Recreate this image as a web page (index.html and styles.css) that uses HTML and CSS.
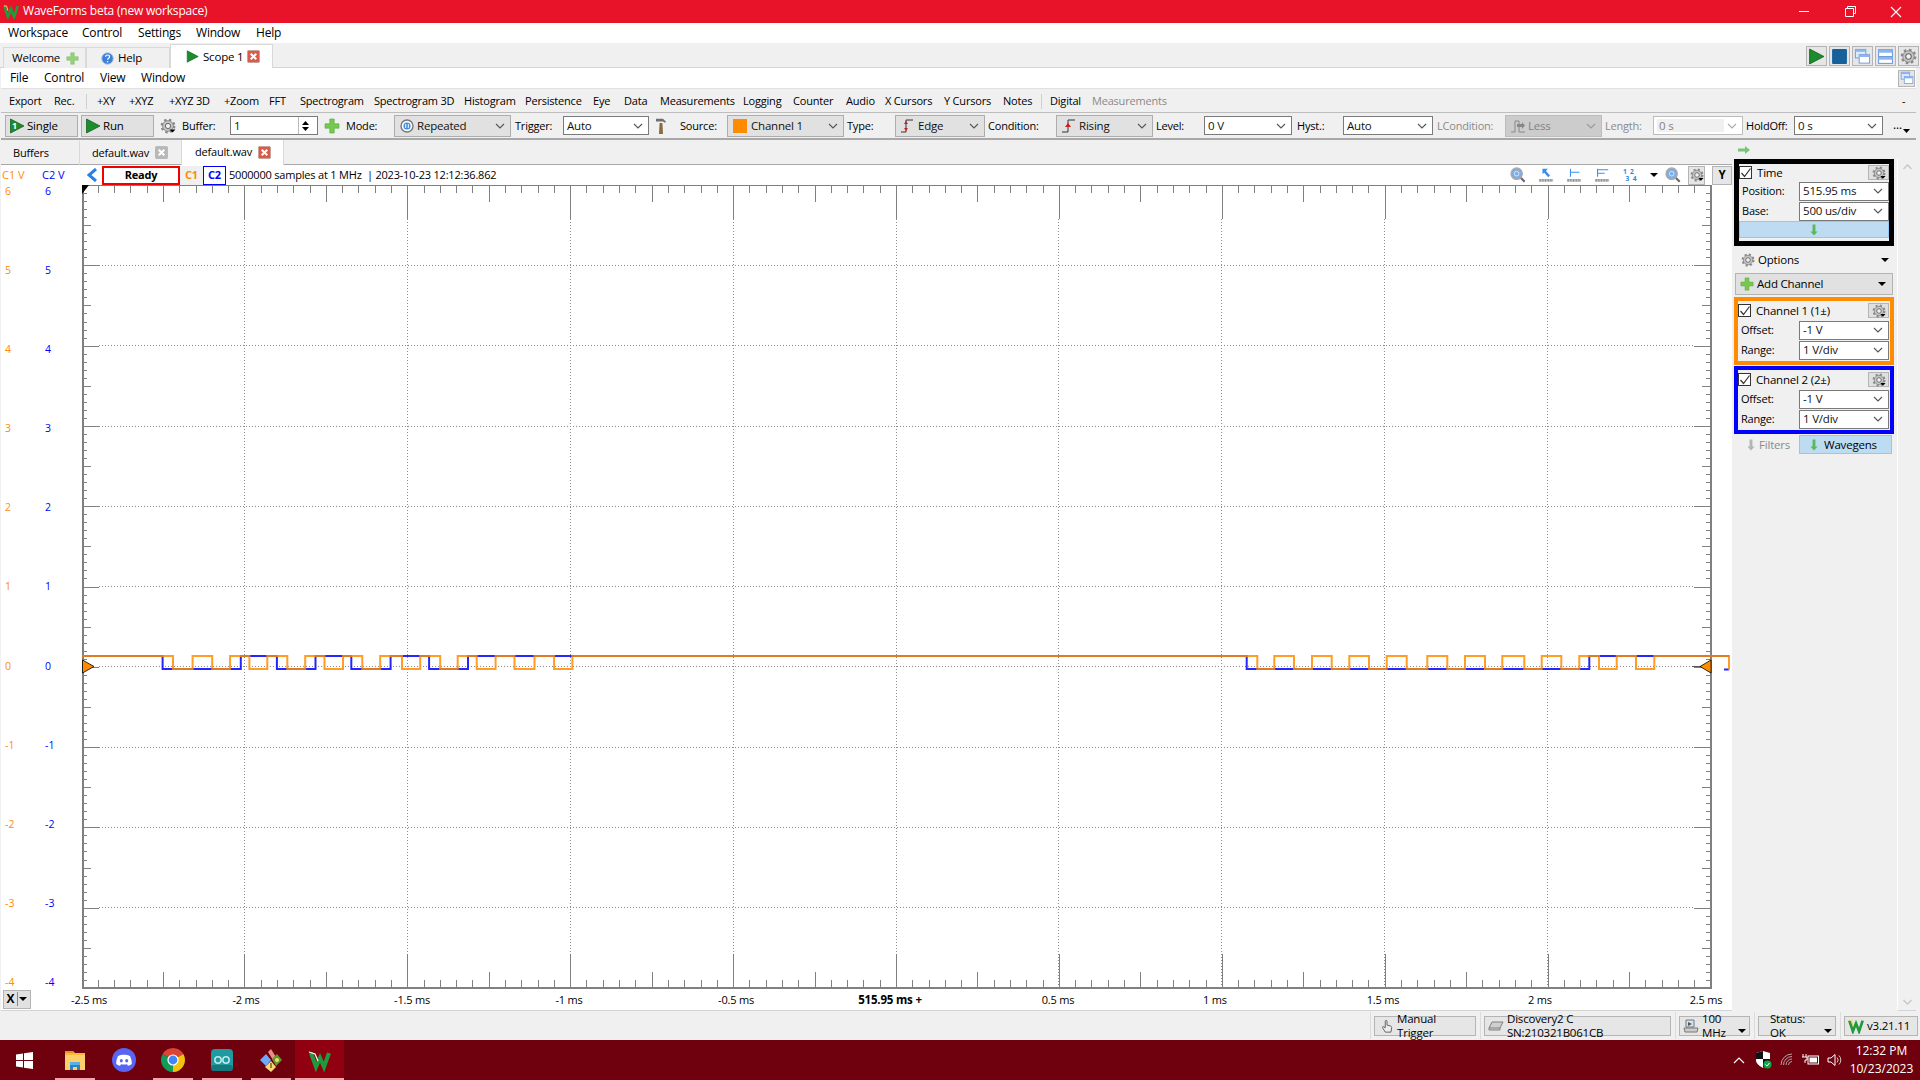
FILE: index.html
```html
<!DOCTYPE html>
<html lang="en">
<head>
<meta charset="utf-8">
<title>WaveForms beta</title>
<link rel="stylesheet" href="styles.css">
</head>
<body>
<svg class="defs" aria-hidden="true">
  <symbol id="gear" viewBox="0 0 16 16">
    <circle cx="8" cy="8" r="6.2" fill="none" stroke="#8a8a8a" stroke-width="2.4" stroke-dasharray="2.4 2.5"/>
    <circle cx="8" cy="8" r="5.4" fill="#c4c4c4" stroke="#7d7d7d" stroke-width=".8"/>
    <circle cx="8" cy="8" r="2.6" fill="#f2f2f2" stroke="#666" stroke-width="1"/>
  </symbol>
  <symbol id="gearc" viewBox="0 0 16 16">
    <use href="#gear"/>
    <path d="M9.5 11.5h6l-3 3z" fill="#000"/>
  </symbol>
  <symbol id="play" viewBox="0 0 16 16">
    <path d="M1.5 1v14L15 8z" fill="#1c8c2c" stroke="#146320" stroke-width=".8"/>
  </symbol>
  <symbol id="plus" viewBox="0 0 16 16">
    <path d="M5.8 1h4.4v4.8H15v4.4h-4.8V15H5.8v-4.8H1V5.8h4.8z" fill="#74c94e" stroke="#5aa83c" stroke-width=".6"/>
  </symbol>
  <symbol id="chev" viewBox="0 0 10 6">
    <path d="M1 1l4 4 4-4" fill="none" stroke="currentColor" stroke-width="1.1"/>
  </symbol>
  <symbol id="x" viewBox="0 0 14 14">
    <rect x=".5" y=".5" width="13" height="13" rx="1" fill="currentColor" stroke="#9b9b9b" stroke-width=".5"/>
    <path d="M4 4l6 6M10 4l-6 6" stroke="#fff" stroke-width="2.2"/>
  </symbol>
  <symbol id="down" viewBox="0 0 10 16">
    <path d="M3.2 1h3.6v9H9.5L5 15 .5 10h2.7z" fill="currentColor"/>
  </symbol>
  <symbol id="logo" viewBox="0 0 18 16">
    <path d="M1.5 2l4 12 3.5-9 3.5 9 4-12" fill="none" stroke="#1f9a3c" stroke-width="3"/>
    <path d="M1 1.5l3 .5 1.5 5" fill="none" stroke="#e9d24a" stroke-width="1.2"/>
  </symbol>
  <symbol id="mag" viewBox="0 0 18 18">
    <path d="M11.5 11.5l5 5" stroke="#666" stroke-width="2.4"/>
    <circle cx="7.5" cy="7.5" r="6.3" fill="#7eaee6" stroke="#a9a9a9" stroke-width="1.6"/>
    <circle cx="7.5" cy="7.5" r="2.6" fill="none" stroke="#dcebfb" stroke-width="1"/>
  </symbol>
  <symbol id="ruler" viewBox="0 0 18 16">
    <rect x="1" y="12.5" width="16" height="3" fill="#bdbdbd"/>
    <path d="M2.5 12.5v3M5.5 12.5v3M8.5 12.5v3M11.5 12.5v3M14.5 12.5v3" stroke="#777" stroke-width=".8"/>
  </symbol>
  <symbol id="wins" viewBox="0 0 18 18">
    <rect x="1.5" y="1.5" width="11" height="9" fill="#dcebfb" stroke="#6d9be0"/>
    <rect x="1.5" y="1.5" width="11" height="2.5" fill="#8db4ec"/>
    <rect x="5.5" y="7" width="11" height="9" fill="#fff" stroke="#6d9be0"/>
    <rect x="5.5" y="7" width="11" height="2.5" fill="#8db4ec"/>
  </symbol>
</svg>

<header class="title">
  <svg class="ic-title"><use href="#logo"/></svg>
  <span class="title-text">WaveForms beta (new workspace)</span>
  <div class="caption">
    <span class="cap-btn"><svg width="11" height="11"><path d="M0 5.5h10" stroke="#fff"/></svg></span>
    <span class="cap-btn"><svg width="11" height="11"><path d="M2.5 2.5V.5h8v7h-2M.5 2.5h8v8h-8z" fill="none" stroke="#fff"/></svg></span>
    <span class="cap-btn"><svg width="12" height="12"><path d="M1 1l10 10M11 1L1 11" stroke="#fff" stroke-width="1.1"/></svg></span>
  </div>
</header>

<nav class="menubar">
  <span>Workspace</span><span>Control</span><span>Settings</span><span>Window</span><span>Help</span>
</nav>

<div class="tabs-main">
  <div class="tab tab-welcome"><span>Welcome</span><svg class="i13 fade"><use href="#plus"/></svg></div>
  <div class="tab tab-help">
    <svg class="i13" viewBox="0 0 14 14"><circle cx="7" cy="7" r="6.2" fill="#3b7fd6" stroke="#a9c6ec"/><path d="M5 5.2c0-2.6 4.2-2.6 4.2 0 0 1.6-2.1 1.6-2.1 3.2" fill="none" stroke="#fff" stroke-width="1.3"/><circle cx="7.1" cy="10.5" r=".9" fill="#fff"/></svg>
    <span>Help</span>
  </div>
  <div class="tab tab-scope"><svg class="i13"><use href="#play"/></svg><span>Scope 1</span><svg class="i13 red"><use href="#x"/></svg></div>
  <div class="top-tools">
    <span class="tool"><svg class="i17"><use href="#play"/></svg></span>
    <span class="tool"><svg class="i17" viewBox="0 0 16 16"><rect x="1" y="1" width="14" height="14" rx="1" fill="#17619a"/></svg></span>
    <span class="tool"><svg class="i17"><use href="#wins"/></svg></span>
    <span class="tool"><svg class="i17" viewBox="0 0 16 16"><rect x="1.5" y="1.5" width="13" height="13" fill="#fff" stroke="#6d9be0"/><rect x="1.5" y="1.5" width="13" height="3" fill="#8db4ec"/><rect x="1.5" y="8" width="13" height="3" fill="#8db4ec"/><path d="M1.5 8h13" stroke="#6d9be0"/></svg></span>
    <span class="tool"><svg class="i17"><use href="#gear"/></svg></span>
  </div>
</div>

<div class="sheet">
  <div class="submenu">
    <span>File</span><span>Control</span><span>View</span><span>Window</span>
    <span class="tool tool-win"><svg class="i14"><use href="#wins"/></svg></span>
  </div>

  <div class="toolbar">
    <span>Export</span><span>Rec.</span><span>+XY</span><span>+XYZ</span><span>+XYZ 3D</span><span>+Zoom</span><span>FFT</span><span>Spectrogram</span><span>Spectrogram 3D</span><span>Histogram</span><span>Persistence</span><span>Eye</span><span>Data</span><span>Measurements</span><span>Logging</span><span>Counter</span><span>Audio</span><span>X Cursors</span><span>Y Cursors</span><span>Notes</span><span>Digital</span><span class="off">Measurements</span><span class="dash">-</span>
  </div>

  <div class="controls">
    <button class="btn w73"><svg class="i16" viewBox="0 0 16 16"><use href="#play"/><text x="3" y="11" class="one">1</text></svg>Single</button>
    <button class="btn w73"><svg class="i16"><use href="#play"/></svg>Run</button>
    <svg class="i16"><use href="#gearc"/></svg>
    <span class="lbl">Buffer:</span>
    <div class="combo white w88"><span>1</span><span class="spin"><svg width="7" height="4" viewBox="0 0 7 4"><path d="M3.5 0l3.5 4H0z"/></svg><svg width="7" height="4" viewBox="0 0 7 4"><path d="M0 0h7L3.5 4z"/></svg></span></div>
    <svg class="i16"><use href="#plus"/></svg>
    <span class="lbl">Mode:</span>
    <div class="combo gray w117"><svg class="i14" viewBox="0 0 14 14"><circle cx="7" cy="7" r="6" fill="#fff" stroke="#777" stroke-width="1.4"/><circle cx="7" cy="7" r="3.6" fill="#3d8ee6"/><path d="M5.7 5v4M8.3 5v4" stroke="#fff"/></svg><span>Repeated</span><svg class="chev"><use href="#chev"/></svg></div>
    <span class="lbl">Trigger:</span>
    <div class="combo white w86"><span>Auto</span><svg class="chev"><use href="#chev"/></svg></div>
    <svg class="i16" viewBox="0 0 16 16"><path d="M6.6 5h2.8l.6 11H6z" fill="#8a6a3a"/><path d="M3 .8h7l3 3-1 1-2-1.2H3z" fill="#6f6f6f"/></svg>
    <span class="lbl">Source:</span>
    <div class="combo gray w117"><span class="swatch"></span><span>Channel 1</span><svg class="chev"><use href="#chev"/></svg></div>
    <span class="lbl">Type:</span>
    <div class="combo gray w90"><svg class="i14" viewBox="0 0 14 14"><path d="M0 13h5V1h7" fill="none" stroke="#333"/><path d="M5 2l2 3H3zM5 12l2-3H3z" fill="#d11a1a"/></svg><span>Edge</span><svg class="chev"><use href="#chev"/></svg></div>
    <span class="lbl">Condition:</span>
    <div class="combo gray w97"><svg class="i14" viewBox="0 0 14 14"><path d="M0 13h6V1h7" fill="none" stroke="#333"/><path d="M6 4l3 4H3z" fill="#d11a1a"/></svg><span>Rising</span><svg class="chev"><use href="#chev"/></svg></div>
    <span class="lbl">Level:</span>
    <div class="combo white w88"><span>0 V</span><svg class="chev"><use href="#chev"/></svg></div>
    <span class="lbl">Hyst.:</span>
    <div class="combo white w90"><span>Auto</span><svg class="chev"><use href="#chev"/></svg></div>
    <span class="lbl off">LCondition:</span>
    <div class="combo dis-gray w97"><svg class="i14" viewBox="0 0 14 14"><path d="M0 13h4V2h4v11h6" fill="none" stroke="#888"/><path d="M6 5h5V3l3 3.5L11 10V8H6z" fill="#888"/></svg><span>Less</span><svg class="chev"><use href="#chev"/></svg></div>
    <span class="lbl off">Length:</span>
    <div class="combo dis w90"><span class="dis-in">0 s</span><svg class="chev"><use href="#chev"/></svg></div>
    <span class="lbl">HoldOff:</span>
    <div class="combo white w89"><span>0 s</span><svg class="chev"><use href="#chev"/></svg></div>
    <span class="more">...<svg width="7" height="4" viewBox="0 0 7 4"><path d="M0 0h7L3.5 4z"/></svg></span>
  </div>

  <div class="body-row">
    <section class="left">
      <div class="tabs-sub">
        <div class="tab2 t-buffers">Buffers</div>
        <div class="tab2 t-file"><span>default.wav</span><svg class="i13 grey"><use href="#x"/></svg></div>
        <div class="tab2 t-active"><span>default.wav</span><svg class="i13 red"><use href="#x"/></svg></div>
      </div>

      <div class="status-row">
        <span class="h1">C1 V</span><span class="h2">C2 V</span>
        <svg class="back" viewBox="0 0 11 14"><path d="M9 1L2 7l7 6" fill="none" stroke="#2a7fe0" stroke-width="3"/></svg>
        <span class="ready">Ready</span>
        <span class="c1">C1</span>
        <span class="c2">C2</span>
        <span class="info">5000000 samples at 1 MHz&nbsp; | 2023-10-23 12:12:36.862</span>
        <div class="plot-tools">
          <div class="pt-a">
            <svg class="i16"><use href="#mag"/></svg>
            <svg class="i16" viewBox="0 0 18 16"><use href="#ruler"/><path d="M5 1h6L9 3.5l4.5 5-2 2L7 5.5 5 7z" fill="#3b8ee8"/></svg>
            <svg class="i16" viewBox="0 0 18 16"><use href="#ruler"/><path d="M5 1v9M5 5h10" stroke="#3b8ee8" stroke-width="1.2"/></svg>
            <svg class="i16" viewBox="0 0 18 16"><use href="#ruler"/><path d="M4 1v9M4 2h12M4 6h8" stroke="#3b8ee8" stroke-width="1.2"/></svg>
            <svg class="i16" viewBox="0 0 18 16"><text x="1" y="7" class="nums">1</text><text x="9" y="7" class="nums">2</text><text x="4" y="15" class="nums">3</text><text x="12" y="15" class="nums">4</text></svg>
            <svg class="caret" viewBox="0 0 8 4"><path d="M0 0h8L4 4z"/></svg>
          </div>
          <div class="pt-b">
            <svg class="i16"><use href="#mag"/></svg>
            <span class="tool tool-g"><svg class="i14"><use href="#gearc"/></svg></span>
            <span class="tool tool-y">Y</span>
          </div>
        </div>
      </div>

      <div class="plot-row">
        <div class="yaxis">
          <div class="ycol orange"><span>6</span><span>5</span><span>4</span><span>3</span><span>2</span><span>1</span><span>0</span><span>-1</span><span>-2</span><span>-3</span><span>-4</span></div>
          <div class="ycol blue"><span>6</span><span>5</span><span>4</span><span>3</span><span>2</span><span>1</span><span>0</span><span>-1</span><span>-2</span><span>-3</span><span>-4</span></div>
        </div>
        <svg class="plot" viewBox="82 185 1650 804" preserveAspectRatio="none">
          <g stroke="#8c8c8c" stroke-width="1" stroke-dasharray="1 2" shape-rendering="crispEdges" fill="none">
            <path d="M244.5 219V988M407.5 219V988M570.5 219V988M733.5 219V988M896.5 219V988M1058.5 219V988M1221.5 219V988M1384.5 219V988M1547.5 219V988"/>
            <path d="M99 265.5H1694M99 345.5H1694M99 426.5H1694M99 506.5H1694M99 586.5H1694M99 666.5H1694M99 747.5H1694M99 827.5H1694M99 907.5H1694"/>
          </g>
          <g stroke="#808080" fill="none" shape-rendering="crispEdges">
            <path d="M81.5 189H1711" stroke-width="8" stroke-dasharray="1 15.29"/>
            <path d="M81.5 193.5H1711" stroke-width="17" stroke-dasharray="1 80.45"/>
            <path d="M81.5 202H1711" stroke-width="34" stroke-dasharray="1 161.9"/>
            <path d="M81.5 984H1711" stroke-width="8" stroke-dasharray="1 15.29"/>
            <path d="M81.5 980H1711" stroke-width="16" stroke-dasharray="1 80.45"/>
            <path d="M81.5 971H1711" stroke-width="34" stroke-dasharray="1 161.9"/>
            <path d="M84.5 185V988" stroke-width="5" stroke-dasharray="1 7.03"/>
            <path d="M86.5 185V988" stroke-width="9" stroke-dasharray="1 39.15"/>
            <path d="M90.5 185V988" stroke-width="17" stroke-dasharray="1 79.3"/>
            <path d="M1708.5 185V988" stroke-width="5" stroke-dasharray="1 7.03"/>
            <path d="M1706.5 185V988" stroke-width="9" stroke-dasharray="1 39.15"/>
            <path d="M1702.5 185V988" stroke-width="17" stroke-dasharray="1 79.3"/>
            <path d="M82.5 185V989M1711 185V989" stroke-width="2"/>
            <path d="M82 185.5H1711M82 988H1711" stroke-width="1.6"/>
            <path d="M1692 666.5h9" stroke="#555"/>
          </g>
          <path d="M82 656H162.6V669H240.8V656H276.9V669H315.5V656H351.3V669H390.6V656H429.1V669H468V656H1246.7V669H1589.3V656H1729M1724 669.5H1729" fill="none" stroke="#0000ff" stroke-opacity=".85" stroke-width="2"/>
          <path d="M82 656H173V669H192.6V656H212.2V669H230.1V656H249.4V669H267.3V656H287.3V669H305.2V656H324.5V669H343V656H362.3V669H380.2V656H402V669H420.2V656H440.2V669H457.7V656H476.7V669H495.6V656H514.5V669H534.5V656H554.1V669H572.4V656H1257.3V669H1274.3V656H1294V669H1312V656H1331.7V669H1349.3V656H1369V669H1386.7V656H1406.7V669H1427.3V656H1447.3V669H1465V656H1485V669H1502.3V656H1524.3V669H1541.7V656H1561.3V669H1579.3V656H1599V669H1616.7V656H1636V669H1654.3V656H1729V670" fill="none" stroke="#ff8c00" stroke-opacity=".85" stroke-width="2"/>
          <path d="M82.5 660L94 666.5 82.5 673z" fill="#ff8c00" stroke="#000" stroke-width=".8"/>
          <path d="M1711 660L1700 666.5 1711 673z" fill="#ff8c00" stroke="#000" stroke-width=".8"/>
          <path d="M82 185h7l-7 9z" fill="#000"/>
        </svg>
      </div>

      <div class="xaxis">
        <span class="xbtn"><b>X</b><svg class="caret" viewBox="0 0 8 4"><path d="M0 0h8L4 4z"/></svg></span>
        <span class="xl" style="left:88px">-2.5 ms</span>
        <span class="xl" style="left:245px">-2 ms</span>
        <span class="xl" style="left:411px">-1.5 ms</span>
        <span class="xl" style="left:568px">-1 ms</span>
        <span class="xl" style="left:735px">-0.5 ms</span>
        <span class="xl cur" style="left:889px">515.95 ms +</span>
        <span class="xl" style="left:1057px">0.5 ms</span>
        <span class="xl" style="left:1214px">1 ms</span>
        <span class="xl" style="left:1382px">1.5 ms</span>
        <span class="xl" style="left:1539px">2 ms</span>
        <span class="xl" style="left:1705px">2.5 ms</span>
      </div>
    </section>

    <aside class="panel">
      <div class="panel-main">
        <div class="green-arrow"><svg width="14" height="8" viewBox="0 0 14 8"><path d="M1 2.5h7V0l5 4-5 4V5.500H1z" fill="#78c478"/></svg></div>

        <div class="box box-time">
          <div class="box-head"><span class="check"><svg width="12" height="12" viewBox="0 0 12 12"><path d="M1.500 6l3 3.500L10.500 1.500" fill="none" stroke="#333" stroke-width="1.200"/></svg></span><span>Time</span><span class="tool tool-s"><svg class="i14"><use href="#gearc"/></svg></span></div>
          <div class="box-line"><span>Position:</span><div class="combo white wp"><span>515.95 ms</span><svg class="chev"><use href="#chev"/></svg></div></div>
          <div class="box-line"><span>Base:</span><div class="combo white wp"><span>500 us/div</span><svg class="chev"><use href="#chev"/></svg></div></div>
          <div class="expand"><svg class="dn"><use href="#down"/></svg></div>
        </div>

        <div class="options"><svg class="i14"><use href="#gear"/></svg><span>Options</span><svg class="caret-l" viewBox="0 0 8 4"><path d="M0 0h8L4 4z"/></svg></div>
        <div class="add"><svg class="i14"><use href="#plus"/></svg><span>Add Channel</span><svg class="caret-l" viewBox="0 0 8 4"><path d="M0 0h8L4 4z"/></svg></div>

        <div class="box box-ch b-orange">
          <div class="box-head"><span class="check"><svg width="12" height="12" viewBox="0 0 12 12"><path d="M1.500 6l3 3.500L10.500 1.500" fill="none" stroke="#333" stroke-width="1.200"/></svg></span><span>Channel 1 (1±)</span><span class="tool tool-s"><svg class="i14"><use href="#gearc"/></svg></span></div>
          <div class="box-line"><span>Offset:</span><div class="combo white wp"><span>-1 V</span><svg class="chev"><use href="#chev"/></svg></div></div>
          <div class="box-line"><span>Range:</span><div class="combo white wp"><span>1 V/div</span><svg class="chev"><use href="#chev"/></svg></div></div>
        </div>

        <div class="box box-ch b-blue">
          <div class="box-head"><span class="check"><svg width="12" height="12" viewBox="0 0 12 12"><path d="M1.500 6l3 3.500L10.500 1.500" fill="none" stroke="#333" stroke-width="1.200"/></svg></span><span>Channel 2 (2±)</span><span class="tool tool-s"><svg class="i14"><use href="#gearc"/></svg></span></div>
          <div class="box-line"><span>Offset:</span><div class="combo white wp"><span>-1 V</span><svg class="chev"><use href="#chev"/></svg></div></div>
          <div class="box-line"><span>Range:</span><div class="combo white wp"><span>1 V/div</span><svg class="chev"><use href="#chev"/></svg></div></div>
        </div>

        <div class="flt-row">
          <span class="flt"><svg class="dn grey-arrow"><use href="#down"/></svg>Filters</span>
          <span class="wvg"><svg class="dn"><use href="#down"/></svg>Wavegens</span>
        </div>
      </div>
      <div class="scroll">
        <svg width="11" height="6" viewBox="0 0 10 6"><path d="M1 5l4-4 4 4" fill="none" stroke="#c8c8c8" stroke-width="1.500"/></svg>
        <svg width="11" height="6" viewBox="0 0 10 6"><path d="M1 1l4 4 4-4" fill="none" stroke="#c8c8c8" stroke-width="1.500"/></svg>
      </div>
    </aside>
  </div>
</div>

<footer class="statusbar">
  <span class="sb s-manual"><svg class="i14" viewBox="0 0 14 16"><path d="M5 15l-3-5c-.6-1 .6-2 1.400-1L5 10V2.500c0-1.200 2-1.200 2 0V7l4 1c1 .3 1.500 1 1.300 2l-.8 5z" fill="#eee" stroke="#555"/></svg>Manual Trigger</span>
  <span class="sb s-disc"><svg class="i16" viewBox="0 0 16 12"><path d="M4 2h11l-3 6v2H1V8z" fill="#cfcfcf" stroke="#808080"/><path d="M1 8h11" stroke="#808080"/></svg>Discovery2 C SN:210321B061CB</span>
  <span class="sb s-mhz"><svg class="i16" viewBox="0 0 16 14"><path d="M3 1h8v7H3z" fill="#cfe3f5" stroke="#777"/><path d="M1 9h14l-1 4H2z" fill="#ccc" stroke="#777"/><path d="M5 3l4 2-4 2z" fill="#555"/></svg>100 MHz<svg class="caret" viewBox="0 0 8 4"><path d="M0 0h8L4 4z"/></svg></span>
  <span class="sb s-stat">Status: OK<svg class="caret" viewBox="0 0 8 4"><path d="M0 0h8L4 4z"/></svg></span>
  <span class="sb s-ver"><svg class="i16"><use href="#logo"/></svg>v3.21.11</span>
</footer>

<div class="taskbar">
  <div class="task start"><svg width="17" height="17" viewBox="0 0 17 17"><path d="M0 2.400l7-1V8H0zM8 1.300L17 0v8H8zM0 9h7v6.600l-7-1zM8 9h9v8l-9-1.300z" fill="#fff"/></svg></div>
  <div class="task open"><svg class="i24" viewBox="0 0 24 24"><path d="M2 3h8l2 2h10v17H2z" fill="#f5b93c"/><path d="M2 3h8l1 2H2z" fill="#d99a22"/><rect x="2" y="7" width="20" height="15" fill="#fbd06a"/><path d="M7 22v-6h10v6h-3v-3h-4v3z" fill="#2a83c8"/><rect x="7" y="14" width="10" height="3" fill="#58b0e8"/></svg></div>
  <div class="task"><svg class="i24" viewBox="0 0 24 24"><circle cx="12" cy="12" r="12" fill="#5865f2"/><path d="M6 8c3-1.600 9-1.600 12 0 1.200 2.500 1.800 5 1.800 8-1.200 1-2.600 1.600-3.800 1.800l-1-1.600c-1.800.5-4.200.5-6 0l-1 1.600c-1.200-.2-2.600-.8-3.800-1.800 0-3 .6-5.500 1.800-8z" fill="#fff"/><ellipse cx="9.300" cy="12.800" rx="1.500" ry="1.700" fill="#5865f2"/><ellipse cx="14.700" cy="12.800" rx="1.500" ry="1.700" fill="#5865f2"/></svg></div>
  <div class="task open"><svg class="i24" viewBox="0 0 24 24"><path d="M12 12L1.610 6A12 12 0 0 1 22.390 6z" fill="#db4437"/><path d="M12 12L22.390 6A12 12 0 0 1 12 24z" fill="#f4c20d"/><path d="M12 12V24A12 12 0 0 1 1.610 6z" fill="#0f9d58"/><circle cx="12" cy="12" r="5.600" fill="#fff"/><circle cx="12" cy="12" r="4.400" fill="#4285f4"/></svg></div>
  <div class="task open"><svg class="i24" viewBox="0 0 24 24"><rect x="1" y="1" width="22" height="22" rx="4" fill="#1e9aa0"/><rect x="1" y="17" width="22" height="6" rx="3" fill="#16777c"/><circle cx="8" cy="12" r="3.200" fill="none" stroke="#bfe9ea" stroke-width="1.500"/><circle cx="16" cy="12" r="3.200" fill="none" stroke="#bfe9ea" stroke-width="1.500"/></svg></div>
  <div class="task open"><svg class="i24" viewBox="0 0 24 24"><path d="M9 4l3-3 5 8-3 3z" fill="#f08a8a"/><path d="M1 12l6-6 5 6-5 6z" fill="#6ea8fe"/><path d="M13 11l5-5 5 6-6 6z" fill="#5c9e2e"/><circle cx="18" cy="12" r="2" fill="#f7d774"/><path d="M6 19l6-6 5 6-5 5z" fill="#f7d774"/><path d="M12 15v5" stroke="#8a5a1e" stroke-width="1.500"/></svg></div>
  <div class="task active"><svg class="i24" viewBox="0 0 24 20"><path d="M3 3l5 14 4-9 4 9 5-14" fill="none" stroke="#1f9a3c" stroke-width="4"/><path d="M1 2l6 2 3 7" fill="none" stroke="#fff" stroke-width="1.300"/></svg></div>
  <div class="tray">
    <span class="tr"><svg width="12" height="7" viewBox="0 0 12 7"><path d="M1 6l5-5 5 5" fill="none" stroke="#fff" stroke-width="1.200"/></svg></span>
    <span class="tr"><svg width="17" height="18" viewBox="0 0 17 18"><path d="M1 2l7-2 7 2v7c0 4-4 6-7 8-3-2-7-4-7-8z" fill="#fff"/><path d="M8 0v8H1V2zM8 8h7v1c0 4-4 6-7 8z" fill="#111"/><circle cx="12.500" cy="13.500" r="4" fill="#15a34a"/><path d="M10.500 13.500l1.500 1.500 2.500-3" fill="none" stroke="#fff"/></svg></span>
    <span class="tr"><svg width="14" height="14" viewBox="0 0 14 14" fill="none" stroke="#b9a0a4"><path d="M1 12a11 11 0 0 1 11-11M3.500 12A8.500 8.500 0 0 1 12 3.500M6 12a6 6 0 0 1 6-6M8.500 12A3.500 3.500 0 0 1 12 8.500"/></svg></span>
    <span class="tr"><svg width="18" height="12" viewBox="0 0 18 12"><path d="M1 0v3M4 0v3M0 3h5v3H3v3" fill="none" stroke="#fff"/><rect x="6" y="2" width="10.500" height="8" fill="none" stroke="#fff"/><rect x="7.500" y="3.500" width="7.500" height="5" fill="#fff"/></svg></span>
    <span class="tr"><svg width="16" height="14" viewBox="0 0 16 14" fill="none" stroke="#fff"><path d="M1 5h3l4-3.500v11L4 9H1z"/><path d="M10 4.500a3.500 3.500 0 0 1 0 5M12 2.500a6.500 6.500 0 0 1 0 9" stroke="#d8c4c7"/></svg></span>
    <div class="clock"><span>12:32 PM</span><span>10/23/2023</span></div>
  </div>
</div>
</body>
</html>
```

FILE: styles.css
```css
* { box-sizing: border-box; }
html, body { margin: 0; padding: 0; }
body {
  width: 1920px; height: 1080px; overflow: hidden;
  background: #f0f0f0; color: #000;
  font: 11px/1.2 "Open Sans", "Noto Sans", sans-serif;
  letter-spacing: -.2px;
}
svg { display: block; flex: none; }
.defs { position: absolute; width: 0; height: 0; }
.i13 { width: 13px; height: 13px; }
.i14 { width: 14px; height: 14px; }
.i16 { width: 16px; height: 16px; }
.i17 { width: 17px; height: 17px; }
.i24 { width: 24px; height: 24px; }
.fade { opacity: .75; }
.red { color: #dd5a46; }
.grey { color: #b8b8b8; }
.off { color: #8a8a8a; }

.title { height: 23px; background: #e81229; color: #fff; display: flex; align-items: center; padding-left: 3px; font-size: 12px; }
.ic-title { width: 16px; height: 15px; margin-right: 4px; }
.caption { margin-left: auto; margin-right: 1px; display: flex; }
.cap-btn { width: 46px; height: 23px; display: flex; align-items: center; justify-content: center; }

.menubar { height: 20px; background: #fff; display: grid; grid-template-columns: 74px 56px 58px 60px auto; align-items: center; padding-left: 8px; font-size: 12px; }

.tabs-main { height: 25px; display: flex; align-items: flex-end; padding-left: 3px; border-bottom: 1px solid #d4d4d4; position: relative; font-size: 11.500px; }
.tab { display: flex; align-items: center; height: 21px; background: #f0f0f0; border: 1px solid #d9d9d9; border-bottom: 0; margin-bottom: -1px; }
.tab-welcome { width: 83px; padding-left: 8px; gap: 6px; }
.tab-help { width: 84px; padding-left: 14px; gap: 4px; }
.tab-scope { width: 103px; height: 24px; background: #fff; padding-left: 15px; gap: 4px; }
.top-tools { margin-left: auto; margin-right: 1px; display: flex; gap: 2px; align-self: flex-start; padding-top: 3px; }
.tool { width: 21px; height: 20px; background: #e6e6e6; border: 1px solid #b4b4b4; display: flex; align-items: center; justify-content: center; }

.sheet { margin: 0 4px 0 1px; }
.submenu { height: 21px; background: #fff; display: grid; grid-template-columns: 34px 56px 41px 1fr 18px; align-items: center; padding-left: 9px; font-size: 12px; border-bottom: 1px solid #e0e0e0; }
.tool-win { width: 17px; height: 17px; }

.toolbar { height: 24px; display: grid; align-items: center; padding-left: 8px; border-bottom: 1px solid #bdbdbd;
  grid-template-columns: 45px 43px 32px 40px 55px 45px 31px 74px 90px 61px 68px 31px 36px 83px 50px 53px 39px 59px 59px 47px 42px 1fr 14px; }
.toolbar span:nth-child(3) { position: relative; }
.toolbar span:nth-child(3)::before, .toolbar span:nth-child(21)::before { content: ""; position: absolute; width: 1px; height: 15px; background: #cfcfcf; }
.toolbar span:nth-child(3)::before { left: -11px; top: 0; }
.toolbar span:nth-child(21) { position: relative; }
.toolbar span:nth-child(21)::before { left: -9px; top: 0; }

.controls { height: 27px; display: grid; align-items: center; padding-left: 4px; border-bottom: 2px solid #a8a8a8;
  grid-template-columns: 76px 79px 22px 48px 94px 22px 48px 121px 48px 90px 27px 47px 120px 48px 93px 68px 100px 48px 93px 46px 94px 68px 100px 48px 93px 48px 99px 1fr; }
.btn { font: inherit; letter-spacing: inherit; height: 22px; background: #e1e1e1; border: 1px solid #adadad; display: flex; align-items: center; gap: 2px; padding: 0 3px; font-size: 11.500px; text-align: left; }
.one { font: bold 9px "Open Sans", sans-serif; fill: #fff; }
.w73 { width: 73px; }
.w86 { width: 86px; }
.w88 { width: 88px; }
.w89 { width: 89px; }
.w90 { width: 90px; }
.w97 { width: 97px; }
.w117 { width: 117px; }
.wp { width: 90px; }
.lbl { font-size: 11px; }
.combo { display: flex; align-items: center; gap: 3px; font-size: 11.500px; position: relative; color: #111; }
.combo .chev { width: 10px; height: 6px; margin-left: auto; color: #555; }
.combo.white { height: 19px; background: #fff; border: 1px solid #7a7a7a; padding: 0 5px 0 3px; }
.combo.gray { height: 22px; background: #e1e1e1; border: 1px solid #adadad; padding: 0 5px 0 5px; }
.combo.dis-gray { height: 22px; background: #cccccc; border: 1px solid #bdbdbd; padding: 0 5px; color: #838383; }
.combo.dis { height: 19px; background: #fff; border: 1px solid #bdbdbd; padding: 2px 5px 2px 3px; color: #838383; }
.combo.dis .chev { color: #aaa; }
.combo.dis-gray .chev { color: #999; }
.dis-in { background: #f0f0f0; height: 100%; width: 68px; padding-left: 2px; display: flex; align-items: center; }
.spin { margin-left: auto; width: 14px; height: 100%; border-left: 1px solid #bbb; display: flex; flex-direction: column; align-items: center; justify-content: center; gap: 2px; }
.swatch { width: 14px; height: 14px; background: #ff8c00; margin-right: 1px; }
.more { display: flex; align-items: flex-end; font-size: 12px; gap: 1px; }

.body-row { display: flex; height: 871px; }
.left { width: 1731px; display: flex; flex-direction: column; background: #fff; border-bottom: 1px solid #d4d4d4; }
.tabs-sub { height: 25px; background: #f0f0f0; display: flex; align-items: flex-end; border-bottom: 1px solid #a8a8a8; font-size: 11px; flex: none; }
.tab2 { height: 24px; display: flex; align-items: center; border-right: 1px solid #d9d9d9; margin-bottom: -1px; padding-bottom: 1px; }
.t-buffers { width: 79px; padding-left: 12px; }
.t-file { width: 101px; padding-left: 12px; gap: 6px; border-right: 0; }
.t-active { width: 103px; height: 25px; padding-left: 13px; gap: 6px; background: #fff; border-left: 1px solid #d9d9d9; }

.status-row { height: 20px; flex: none; display: flex; align-items: center; position: relative; }
.h1 { width: 40px; padding-left: 1px; color: #ff8c00; letter-spacing: 0; }
.h2 { width: 46px; padding-left: 1px; color: #0000ff; letter-spacing: 0; }
.back { width: 11px; height: 14px; margin-right: 4px; }
.ready { width: 78px; height: 19px; border: 2px solid #f00000; font-weight: 700; text-align: center; display: flex; align-items: center; justify-content: center; }
.c1 { width: 23px; height: 19px; background: #f0f0f0; color: #ff8c00; font-weight: 700; display: flex; align-items: center; justify-content: center; }
.c2 { width: 23px; height: 19px; border: 1px solid #0000ff; color: #0000ff; font-weight: 700; display: flex; align-items: center; justify-content: center; }
.info { margin-left: 3px; }
.plot-tools { margin-left: auto; margin-right: 0; display: flex; gap: 7px; align-items: center; }
.pt-a { display: flex; gap: 12px; align-items: center; }
.pt-b { display: flex; gap: 7px; align-items: center; }
.nums { font: bold 7.500px "Open Sans", sans-serif; fill: #2a8ae8; }
.caret { width: 8px; height: 4px; }
.tool-g { width: 17px; height: 19px; }
.tool-y { width: 20px; height: 19px; font-weight: 700; font-size: 11.500px; }

.plot-row { height: 804px; flex: none; display: flex; }
.yaxis { width: 81px; flex: none; display: flex; }
.ycol { width: 40px; display: flex; flex-direction: column; justify-content: space-between; padding-left: 4px; line-height: 13px; letter-spacing: 0; font-size: 10.500px; }
.orange { color: #ff8c00; }
.blue { color: #0000ff; }
.plot { width: 1650px; height: 804px; flex: none; overflow: visible; }

.xaxis { height: 21px; flex: none; display: flex; align-items: center; padding-left: 2px; position: relative; }
.xbtn { width: 28px; height: 19px; background: #e1e1e1; border: 1px solid #b4b4b4; display: flex; align-items: center; justify-content: space-around; padding: 0 2px; margin-top: -1px; }
.xbtn b { font-size: 12px; border-right: 1px solid #888; padding-right: 3px; }
.xl { position: absolute; top: 4px; transform: translateX(-50%); white-space: nowrap; }
.cur { font-weight: 700; font-size: 11.500px; }

.panel { width: 184px; display: flex; }
.panel-main { width: 165px; padding-left: 2px; display: flex; flex-direction: column; }
.green-arrow { height: 19px; padding: 6px 0 0 3px; }
.box { width: 160px; flex: none; }
.box-time { height: 87px; border: 5px solid #000; }
.box-ch { height: 68px; border: 4px solid; padding-right: 1px; margin-bottom: 1px; }
.b-orange { border-color: #ff8c00; }
.b-blue { border-color: #0000ff; }
.box-head { height: 17px; display: flex; align-items: center; font-size: 11.500px; gap: 5px; }
.box-ch .box-head { height: 19px; }
.check { width: 13px; height: 13px; border: 1px solid #333; background: #fff; display: flex; align-items: center; justify-content: center; margin-left: 0; }
.tool-s { width: 21px; height: 15px; margin-left: auto; background: #e0e0e0; }
.box-line { display: flex; justify-content: space-between; align-items: center; height: 20px; padding-left: 3px; font-size: 11px; }
.expand { height: 17px; background: #bddcf2; border: 1px solid #90c8f6; display: flex; justify-content: center; align-items: center; }
.dn { width: 8px; height: 14px; color: #5cb85c; }
.grey-arrow { color: #b5b5b5; }
.options { height: 27px; display: flex; align-items: center; gap: 3px; padding: 0 8px 0 7px; font-size: 11.500px; flex: none; }
.add { height: 22px; width: 158px; margin-left: 1px; margin-bottom: 2px; background: #e1e1e1; border: 1px solid #b4b4b4; display: flex; align-items: center; gap: 3px; padding: 0 6px 0 4px; font-size: 11.500px; flex: none; }
.caret-l { width: 8px; height: 4px; margin-left: auto; }
.flt-row { display: flex; height: 19px; font-size: 11.500px; flex: none; }
.flt { width: 65px; display: flex; align-items: center; gap: 4px; padding-left: 13px; color: #8a8a8a; }
.wvg { width: 93px; background: #bddcf2; border: 1px solid #90c8f6; display: flex; align-items: center; gap: 6px; padding-left: 10px; }
.scroll { width: 19px; background: #f0f0f0; border-left: 1px solid #fff; margin-top: 19px; display: flex; flex-direction: column; justify-content: space-between; align-items: center; padding: 5px 0 5px 0; border-bottom: 1px solid #d4d4d4; }

.statusbar { height: 29px; display: flex; justify-content: flex-end; align-items: center; padding-right: 2px; gap: 8px; font-size: 11.500px; }
.sb { height: 20px; background: #e6e6e6; border: 1px solid #b4b4b4; display: flex; align-items: center; gap: 3px; padding: 0 3px; position: relative; }
.sb::before { content: ""; position: absolute; left: -5px; top: -5px; height: 27px; width: 1px; background: #dcdcdc; }
.s-manual { width: 102px; padding-left: 5px; }
.s-disc { width: 187px; }
.s-mhz { width: 71px; }
.s-stat { width: 78px; padding-left: 11px; justify-content: space-between; }
.s-ver { width: 74px; }
.s-mhz .caret, .s-stat .caret { align-self: flex-end; margin-bottom: 2px; }

.taskbar { height: 40px; background: #6f000d; display: flex; }
.task { width: 49px; height: 40px; display: flex; align-items: center; justify-content: center; position: relative; }
.start { width: 50px; padding-right: 2px; }
.open::after { content: ""; position: absolute; left: 5px; right: 4px; bottom: 0; height: 2px; background: #f4a4ab; }
.active { background: #900010; }
.active::after { content: ""; position: absolute; left: 0; right: 0; bottom: 0; height: 2px; background: #f4a4ab; }
.tray { margin-left: auto; display: flex; align-items: center; color: #fff; }
.tr { width: 24px; display: flex; justify-content: center; }
.clock { width: 69px; display: flex; flex-direction: column; align-items: center; gap: 4px; font-size: 12px; line-height: 14px; margin-right: 4px; letter-spacing: 0; }
```
